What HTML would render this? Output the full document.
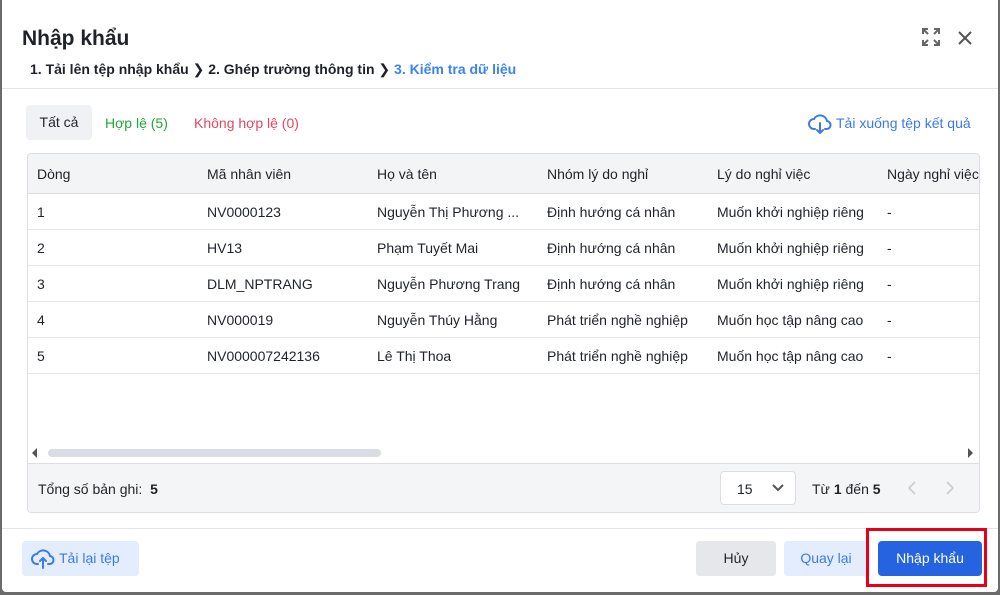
<!DOCTYPE html>
<html><head><meta charset="utf-8"><style>
*{box-sizing:border-box;margin:0;padding:0}
body{width:1000px;height:595px;background:#6b6b6b;font-family:"Liberation Sans",sans-serif;color:#1f2329;position:relative;overflow:hidden;font-size:14px}
.modal{position:absolute;left:2px;top:0;width:996px;height:592px;background:#fff;border-radius:0 0 4px 4px}
.a{position:absolute;white-space:nowrap}
.tbl{position:absolute;left:25px;top:153px;width:953px;height:360px;border:1px solid #dcdee3;border-radius:4px;overflow:hidden;background:#fff}
.row{position:absolute;left:0;width:951px;height:36px;border-bottom:1px solid #e5e6ea}
.c{position:absolute;top:0;line-height:36px;white-space:nowrap;overflow:hidden}
.btn{position:absolute;height:35px;border-radius:4px;line-height:35px;text-align:center;font-size:14px}
</style></head><body>
<div class="modal">
<div class="a" style="left:20px;top:27px;font-size:21px;font-weight:bold">Nhập khẩu</div>
<svg class="a" style="left:919px;top:27px" width="20" height="20" viewBox="0 0 20 20" fill="none" stroke="#666" stroke-width="2"><path d="M2 7V2h5M13 2h5v5M18 13v5h-5M7 18H2v-5M2 2l5 5M18 2l-5 5M18 18l-5-5M2 18l5-5"/></svg>
<svg class="a" style="left:956px;top:31px" width="14" height="14" viewBox="0 0 14 14" stroke="#555" stroke-width="2"><path d="M1 1l12 12M13 1L1 13"/></svg>
<div class="a" style="left:28px;top:61px;font-size:14px;font-weight:bold">1. Tải lên tệp nhập khẩu <span style="font-weight:normal">&#x276F;</span> 2. Ghép trường thông tin <span style="font-weight:normal">&#x276F;</span> <span style="color:#3b82f6">3. Kiểm tra dữ liệu</span></div>
<div class="a" style="left:0;top:88px;width:996px;height:1px;background:#e3e4e8"></div>
<div class="a" style="left:24px;top:105px;width:66px;height:35px;background:#f0f1f4;border-radius:4px;line-height:35px;text-align:center">Tất cả</div>
<div class="a" style="left:103px;top:115px;color:#22a83a">Hợp lệ (5)</div>
<div class="a" style="left:192px;top:115px;color:#e5485d">Không hợp lệ (0)</div>
<svg class="a" style="left:806px;top:114px" width="24" height="20" viewBox="0 0 24 20" fill="none" stroke="#3b7be8" stroke-width="2" stroke-linecap="round"><path d="M7 15H6a5 5 0 0 1 0-10 7 7 0 0 1 13 2 4 4 0 0 1-1 8h-1M12 9v10M9 16l3 3 3-3"/></svg>
<div class="a" style="left:834px;top:115px;color:#3b7be8">Tải xuống tệp kết quả</div>
<div class="tbl">
<div class="row" style="top:0;height:40px;background:#f3f4f6;border-bottom:1px solid #dcdee3"></div>
<div class="c" style="left:9px;top:2px">Dòng</div><div class="c" style="left:179px;top:2px">Mã nhân viên</div><div class="c" style="left:349px;top:2px">Họ và tên</div><div class="c" style="left:519px;top:2px">Nhóm lý do nghỉ</div><div class="c" style="left:689px;top:2px">Lý do nghỉ việc</div><div class="c" style="left:859px;top:2px">Ngày nghỉ việc</div>
<div class="row" style="top:40px"><div class="c" style="left:9px">1</div><div class="c" style="left:179px">NV0000123</div><div class="c" style="left:349px">Nguyễn Thị Phương ...</div><div class="c" style="left:519px">Định hướng cá nhân</div><div class="c" style="left:689px;width:151px">Muốn khởi nghiệp riêng</div><div class="c" style="left:859px">-</div></div>
<div class="row" style="top:76px"><div class="c" style="left:9px">2</div><div class="c" style="left:179px">HV13</div><div class="c" style="left:349px">Phạm Tuyết Mai</div><div class="c" style="left:519px">Định hướng cá nhân</div><div class="c" style="left:689px;width:151px">Muốn khởi nghiệp riêng</div><div class="c" style="left:859px">-</div></div>
<div class="row" style="top:112px"><div class="c" style="left:9px">3</div><div class="c" style="left:179px">DLM_NPTRANG</div><div class="c" style="left:349px">Nguyễn Phương Trang</div><div class="c" style="left:519px">Định hướng cá nhân</div><div class="c" style="left:689px;width:151px">Muốn khởi nghiệp riêng</div><div class="c" style="left:859px">-</div></div>
<div class="row" style="top:148px"><div class="c" style="left:9px">4</div><div class="c" style="left:179px">NV000019</div><div class="c" style="left:349px">Nguyễn Thúy Hằng</div><div class="c" style="left:519px">Phát triển nghề nghiệp</div><div class="c" style="left:689px;width:151px">Muốn học tập nâng cao</div><div class="c" style="left:859px">-</div></div>
<div class="row" style="top:184px"><div class="c" style="left:9px">5</div><div class="c" style="left:179px">NV000007242136</div><div class="c" style="left:349px">Lê Thị Thoa</div><div class="c" style="left:519px">Phát triển nghề nghiệp</div><div class="c" style="left:689px;width:151px">Muốn học tập nâng cao</div><div class="c" style="left:859px">-</div></div>
<div class="a" style="left:4px;top:294px;width:0;height:0;border-top:5px solid transparent;border-bottom:5px solid transparent;border-right:5px solid #555"></div>
<div class="a" style="left:20px;top:295px;width:333px;height:8px;background:#d9dce2;border-radius:4px"></div>
<div class="a" style="left:940px;top:294px;width:0;height:0;border-top:5px solid transparent;border-bottom:5px solid transparent;border-left:5px solid #555"></div>
<div class="a" style="left:0;top:309px;width:951px;height:50px;background:#f4f5f7;border-top:1px solid #dcdee3"></div>
<div class="a" style="left:10px;top:327px">Tổng số bản ghi:&nbsp; <b>5</b></div>
<div class="a" style="left:692px;top:317px;width:76px;height:34px;background:#fff;border:1px solid #dcdee3;border-radius:4px"></div>
<div class="a" style="left:709px;top:327px">15</div>
<svg class="a" style="left:744px;top:330px" width="12" height="8" viewBox="0 0 12 8" fill="none" stroke="#555" stroke-width="2"><path d="M1 1l5 5 5-5"/></svg>
<div class="a" style="left:784px;top:327px">Từ <b>1</b> đến <b>5</b></div>
<svg class="a" style="left:880px;top:327px" width="8" height="14" viewBox="0 0 8 14" fill="none" stroke="#c8cbd0" stroke-width="1.6"><path d="M7 1L1 7l6 6"/></svg>
<svg class="a" style="left:918px;top:327px" width="8" height="14" viewBox="0 0 8 14" fill="none" stroke="#c8cbd0" stroke-width="1.6"><path d="M1 1l6 6-6 6"/></svg>
</div>
<div class="a" style="left:0;top:528px;width:996px;height:1px;background:#e3e4e8"></div>
<div class="btn" style="left:20px;top:541px;width:117px;background:#e3edfd;color:#3b7be8"><svg style="position:absolute;left:9px;top:8px" width="24" height="20" viewBox="0 0 24 20" fill="none" stroke="#3b7be8" stroke-width="2" stroke-linecap="round"><path d="M7 15H6a5 5 0 0 1 0-10 7 7 0 0 1 13 2 4 4 0 0 1-1 8h-1M12 19V9M9 12l3-3 3 3"/></svg><span style="position:absolute;left:37px">Tải lại tệp</span></div>
<div class="btn" style="left:694px;top:541px;width:80px;background:#e6e7ea">Hủy</div>
<div class="btn" style="left:782px;top:541px;width:84px;background:#e3edfd;color:#3b7be8">Quay lại</div>
<div class="a" style="left:864px;top:528px;width:121px;height:59px;border:3px solid #e8001b"></div>
<div class="btn" style="left:876px;top:541px;width:104px;background:#2563e0;color:#fff">Nhập khẩu</div>
</div>
</body></html>
